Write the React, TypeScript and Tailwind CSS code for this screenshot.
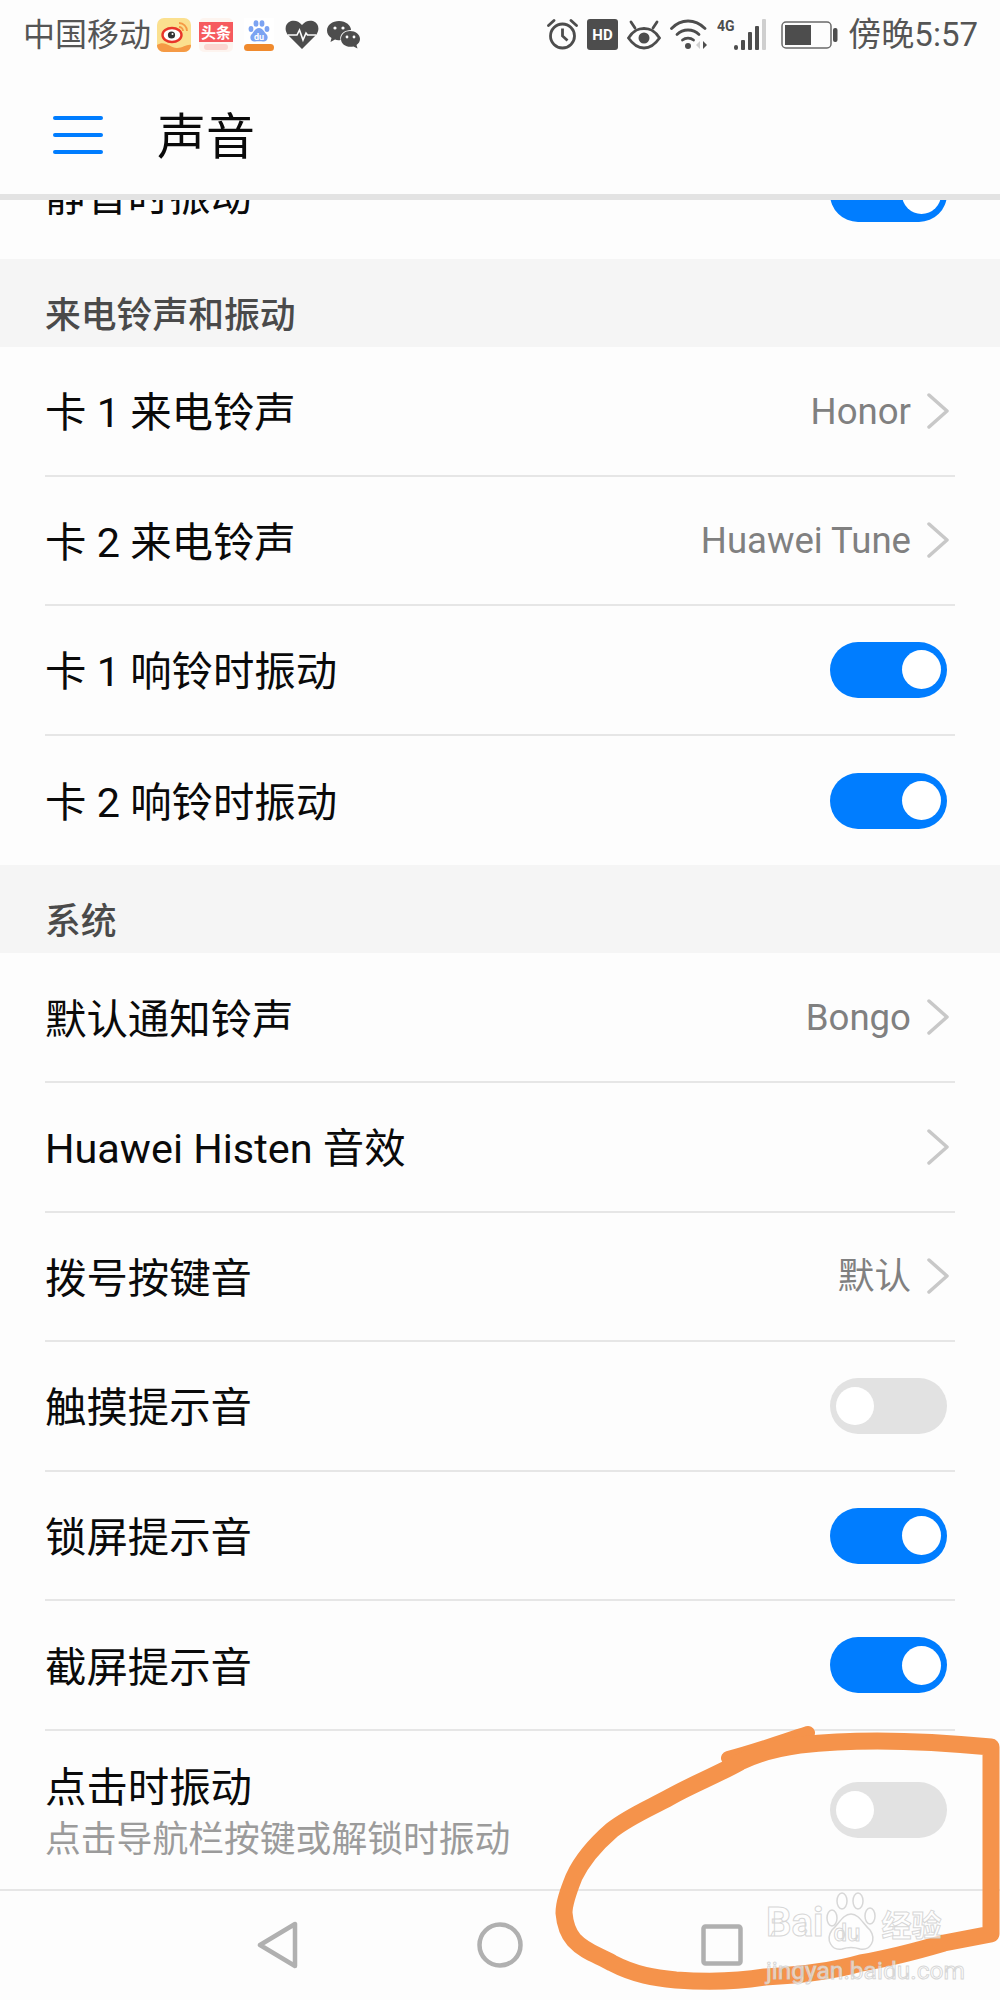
import type { ReactNode } from 'react';

const FONT = 'font-["Roboto","Noto_Sans_CJK_SC",sans-serif]';

/* ── Status bar icons ───────────────────────────────────────────────────── */

function WeiboIcon() {
  return (
    <svg width="34" height="34" viewBox="0 0 34 34">
      <rect width="34" height="34" rx="7" fill="#fbe08f" />
      <path d="M0 27 C8 22 13 30 20 30 C26 30 30 26 34 27 C34 31 31 34 27 34 H7 C3 34 0 31 0 27Z" fill="#f59a45" />
      <ellipse cx="15" cy="17" rx="9.5" ry="7" fill="#fff" stroke="#e8352a" strokeWidth="2.4" />
      <circle cx="14.5" cy="17" r="3.6" fill="#333" />
      <circle cx="15.5" cy="16" r="1" fill="#fff" />
      <path d="M22 5 A8 8 0 0 1 30 13 M22 9 A4 4 0 0 1 26 13" fill="none" stroke="#f59a45" strokeWidth="1.8" />
    </svg>
  );
}

function ToutiaoIcon() {
  return (
    <svg width="34" height="34" viewBox="0 0 34 34">
      <rect width="34" height="34" rx="5" fill="#fdf4ef" />
      <rect y="4" width="34" height="20" fill="#f65a5e" />
      <text x="17" y="20" textAnchor="middle" fontSize="15" fontWeight="700" fill="#fff" fontFamily="Noto Sans CJK SC">头条</text>
      <rect x="5" y="26" width="24" height="6" rx="3" fill="#fbd5d0" />
    </svg>
  );
}

function BaiduIcon() {
  return (
    <svg width="30" height="34" viewBox="0 0 30 34">
      <rect width="30" height="26" fill="#fff" />
      <g fill="#7ba3f2">
        <ellipse cx="7" cy="11" rx="2.4" ry="3" />
        <ellipse cx="12" cy="5.5" rx="2.4" ry="3.2" />
        <ellipse cx="18" cy="5.5" rx="2.4" ry="3.2" />
        <ellipse cx="23" cy="11" rx="2.4" ry="3" />
        <path d="M15 10 C19 10 20 14 23 17 C25 21 22 24 19 23.5 C17 23 13 23 11 23.5 C8 24 5 21 7 17 C10 14 11 10 15 10Z" />
      </g>
      <text x="15" y="22" textAnchor="middle" fontSize="9" fontWeight="700" fill="#fff" fontFamily="Roboto">du</text>
      <rect x="0" y="26" width="30" height="7" rx="3.5" fill="#f08a2e" />
    </svg>
  );
}

function HeartIcon() {
  return (
    <svg width="34" height="30" viewBox="0 0 34 30">
      <path d="M17 29 L3 15 C-1 10 0 3 6 1 C10 0 14 1 17 5 C20 1 24 0 28 1 C34 3 35 10 31 15Z" fill="#4d4d4d" />
      <path d="M3 15 H12 L14.5 10 L18 20 L21 13 L22.5 15 H31" fill="none" stroke="#fdfdfd" strokeWidth="1.6" />
    </svg>
  );
}

function WechatIcon() {
  return (
    <svg width="33" height="28" viewBox="0 0 33 28">
      <path d="M12 0 C19 0 24 4.5 24 9 C18 9 12 13 13.5 19 C11 19.5 9.5 19 8 18.5 L3.5 21 L4.5 17 C1.5 15 0 12.5 0 9.5 C0 4 5.5 0 12 0Z" fill="#4d4d4d" />
      <path d="M23 10 C28.5 10 33 13.5 33 18 C33 20.5 31.5 22.5 29.5 24 L30.5 27.5 L26.5 25.5 C20 27 14 23.5 14 18 C14 13.5 18 10 23 10Z" fill="#4d4d4d" />
      <g fill="#fdfdfd">
        <circle cx="8" cy="7" r="1.6" />
        <circle cx="16" cy="7" r="1.6" />
        <circle cx="20" cy="16" r="1.4" />
        <circle cx="27" cy="16" r="1.4" />
      </g>
    </svg>
  );
}

function AlarmIcon() {
  return (
    <svg width="31" height="31" viewBox="0 0 31 31" fill="none" stroke="#4d4d4d" strokeWidth="2.8">
      <circle cx="15.5" cy="17" r="12" />
      <path d="M15.5 9.5 V17 L20.5 21.5" />
      <path d="M1.5 6.5 L7 1.5 M24 1.5 L29.5 6.5" strokeLinecap="round" />
    </svg>
  );
}

function HdIcon() {
  return (
    <svg width="31" height="31" viewBox="0 0 31 31">
      <rect width="31" height="31" rx="3" fill="#4d4d4d" />
      <text x="15.5" y="21" textAnchor="middle" fontSize="15" fontWeight="700" fill="#fff" fontFamily="Roboto">HD</text>
    </svg>
  );
}

function EyeIcon() {
  return (
    <svg width="34" height="30" viewBox="0 0 34 30" fill="none" stroke="#4d4d4d" strokeWidth="2.8">
      <path d="M1.5 18 C7 9.5 12 8.5 17 8.5 C22 8.5 27 9.5 32.5 18 C27 26 22 28 17 28 C12 28 7 26 1.5 18Z" />
      <circle cx="17" cy="18" r="5.5" fill="#4d4d4d" stroke="none" />
      <path d="M4 2 L8 8 M30 2 L26 8" strokeLinecap="round" />
    </svg>
  );
}

function WifiIcon() {
  return (
    <svg width="38" height="31" viewBox="0 0 38 31" fill="none" stroke="#4d4d4d" strokeWidth="2.8" strokeLinecap="round">
      <path d="M1.5 9.5 C11 -0.5 25 -0.5 35 9.5" />
      <path d="M7 15.5 C13 9.5 23 9.5 29 15.5" />
      <path d="M12.5 21 C15.5 18.5 20.5 18.5 23.5 21" />
      <circle cx="18" cy="27" r="3" fill="#4d4d4d" stroke="none" />
      <path d="M26 26 L30 22 V30Z" fill="#d0d0d0" stroke="none" />
      <path d="M33 22 L37 26 L33 30Z" fill="#4d4d4d" stroke="none" />
    </svg>
  );
}

function SignalIcon() {
  return (
    <svg width="50" height="32" viewBox="0 0 50 32">
      <text x="0" y="12" fontSize="14" fontWeight="700" fill="#4d4d4d" fontFamily="Roboto">4G</text>
      <rect x="17" y="26" width="4" height="5" rx="2" fill="#4d4d4d" />
      <rect x="24" y="21" width="4" height="10" rx="1" fill="#4d4d4d" />
      <rect x="31" y="13" width="4" height="18" rx="1" fill="#4d4d4d" />
      <rect x="38" y="7" width="4" height="24" rx="1" fill="#4d4d4d" />
      <rect x="45" y="0" width="4" height="31" rx="1" fill="#cfcfcf" />
    </svg>
  );
}

function BatteryIcon() {
  return (
    <svg width="57" height="28" viewBox="0 0 57 28">
      <rect x="1" y="1" width="49" height="26" rx="4" fill="none" stroke="#6a6a6a" strokeWidth="1.5" />
      <rect x="4" y="4" width="26" height="20" fill="#4d4d4d" />
      <rect x="52" y="7" width="4.5" height="14" rx="2" fill="#4d4d4d" />
    </svg>
  );
}

/* ── List pieces ────────────────────────────────────────────────────────── */

function Toggle({ on }: { on: boolean }) {
  return (
    <span
      className={`flex h-[56px] w-[117px] shrink-0 items-center rounded-full px-[6px] ${
        on ? 'justify-end bg-[#007dff]' : 'justify-start bg-[#e2e2e2]'
      }`}
    >
      <span className={`rounded-full bg-white ${on ? 'h-[39px] w-[39px]' : 'h-[38px] w-[38px]'}`} />
    </span>
  );
}

function Chevron() {
  return (
    <svg width="22" height="36" viewBox="0 0 22 36" fill="none" stroke="#c8c8c8" strokeWidth="3.5" strokeLinecap="round" strokeLinejoin="round" className="shrink-0">
      <path d="M2 2 L20 18 L2 34" />
    </svg>
  );
}

function Row({ title, value, chevron, toggle, last }: {
  title: string;
  value?: string;
  chevron?: boolean;
  toggle?: boolean;
  last?: boolean;
}) {
  let right: ReactNode = null;
  if (toggle !== undefined) right = <Toggle on={toggle} />;
  else if (chevron)
    right = (
      <div className="-mr-[2px] flex items-center gap-[16px]">
        {value && <span className="pt-[3px] text-[36.6px] text-[#808080]">{value}</span>}
        <Chevron />
      </div>
    );
  return (
    <div className={`mx-[45px] flex h-[129.6px] shrink-0 items-center justify-between pr-[8px] ${last ? '' : 'border-b-2 border-[#e6e6e6]'}`}>
      <span className="pt-[5px] text-[41.4px] leading-[48px] text-[#0a0a0a]">{title}</span>
      {right}
    </div>
  );
}

function SectionHeader({ title }: { title: string }) {
  return (
    <div className="flex h-[88px] shrink-0 items-center bg-[#f5f5f5] px-[45px] pt-[27px] text-[35.8px] font-medium text-[#4a4a4a]">
      {title}
    </div>
  );
}

/* ── Overlays: the hand-drawn ring and the watermark ────────────────────── */

function Scribble() {
  return (
    <svg className="absolute left-0 top-0" width="1000" height="2000" viewBox="0 0 1000 2000" fill="none" stroke="#f5934b" strokeLinecap="round" strokeLinejoin="round">
      <path d="M808 1733 C780 1742 752 1752 728 1758" strokeWidth="14" />
      <path
        strokeWidth="17"
        d="M991 1934 L991 1747 C930 1741 860 1738 800 1745 C778 1748 758 1753 740 1762 C717 1775 693 1784 670 1797 C650 1808 630 1816 612 1830 C597 1843 582 1860 574 1877 C568 1892 564 1903 564 1913 C565 1925 568 1933 574 1940 C585 1952 598 1955 612 1963 C635 1975 655 1978 676 1980 C705 1982 735 1982 765 1977 C800 1975 830 1972 861 1963 C890 1958 920 1950 944 1943 L991 1934"
      />
    </svg>
  );
}

function Watermark() {
  return (
    <div className="absolute left-[766px] top-[1892px] flex flex-col items-start text-white/60 [-webkit-text-stroke:1px_rgba(205,205,205,0.8)]">
      <div className="flex items-end">
        <span className="text-[40px] font-bold leading-[58px]">Bai</span>
        <div className="relative h-[60px] w-[54px]">
          <svg width="54" height="60" viewBox="0 0 54 60" fill="rgba(255,255,255,0.6)" stroke="rgba(205,205,205,0.8)" strokeWidth="1.5">
            <ellipse cx="8" cy="26" rx="5" ry="8" />
            <ellipse cx="18" cy="9" rx="5" ry="8" />
            <ellipse cx="34" cy="9" rx="5" ry="8" />
            <ellipse cx="46" cy="24" rx="5" ry="8" />
            <path d="M27 22 C35 22 39 32 46 38 C53 48 46 59 36 57 C30 55 24 55 18 57 C8 59 1 48 8 38 C15 32 19 22 27 22Z" />
          </svg>
          <span className="absolute bottom-[5px] left-[10px] text-[24px] font-medium leading-[28px]">du</span>
        </div>
        <span className="ml-[4px] text-[30px] font-bold leading-[52px]">经验</span>
      </div>
      <span className="mt-[5px] text-[24.5px] leading-[28px]">jingyan.baidu.com</span>
    </div>
  );
}

/* ── Page ───────────────────────────────────────────────────────────────── */

export default function App() {
  return (
    <div className={`relative flex h-[2000px] w-[1000px] flex-col overflow-hidden bg-[#fdfdfd] ${FONT}`}>
      <div className="flex h-[60px] shrink-0 items-center justify-between pl-[23px] pr-[22px] pt-[9px] text-[32px] text-[#555555]">
        <div className="flex items-center">
          <span>中国移动</span>
          <div className="ml-[6px] flex items-center gap-[8px]">
            <WeiboIcon />
            <ToutiaoIcon />
            <span className="ml-[3px]"><BaiduIcon /></span>
            <span className="ml-[3px]"><HeartIcon /></span>
            <WechatIcon />
          </div>
        </div>
        <div className="flex items-center">
          <div className="flex items-center gap-[9px]">
            <AlarmIcon />
            <HdIcon />
            <EyeIcon />
            <WifiIcon />
            <SignalIcon />
            <span className="ml-[5px]"><BatteryIcon /></span>
          </div>
          <span className="ml-[10px] text-[33px]">傍晚5:57</span>
        </div>
      </div>

      <div className="flex h-[134px] shrink-0 items-center pt-[16px]">
        <div className="ml-[53px] flex w-[50px] flex-col gap-[13px]">
          <span className="h-[4px] rounded-full bg-[#007dff]" />
          <span className="h-[4px] rounded-full bg-[#007dff]" />
          <span className="h-[4px] rounded-full bg-[#007dff]" />
        </div>
        <span className="ml-[54px] pt-[6px] text-[49px] text-[#0a0a0a]">声音</span>
      </div>
      <div className="h-[6px] shrink-0 bg-[#e3e3e3]" />

      {/* row scrolled under the header */}
      <div className="flex h-[59px] shrink-0 flex-col justify-end overflow-hidden">
        <Row title="静音时振动" toggle last />
      </div>

      <SectionHeader title="来电铃声和振动" />
      <Row title="卡 1 来电铃声" value="Honor" chevron />
      <Row title="卡 2 来电铃声" value="Huawei Tune" chevron />
      <Row title="卡 1 响铃时振动" toggle />
      <Row title="卡 2 响铃时振动" toggle last />

      <SectionHeader title="系统" />
      <Row title="默认通知铃声" value="Bongo" chevron />
      <Row title="Huawei Histen 音效" chevron />
      <Row title="拨号按键音" value="默认" chevron />
      <Row title="触摸提示音" toggle={false} />
      <Row title="锁屏提示音" toggle />
      <Row title="截屏提示音" toggle />
      <div className="mx-[45px] flex h-[158px] shrink-0 items-center justify-between pr-[8px]">
        <div className="flex flex-col pt-[6px]">
          <span className="text-[41.4px] leading-[48px] text-[#0a0a0a]">点击时振动</span>
          <span className="mt-[6px] text-[35.8px] leading-[44px] text-[#9b9b9b]">点击导航栏按键或解锁时振动</span>
        </div>
        <Toggle on={false} />
      </div>

      {/* navigation bar */}
      <div className="flex flex-1 items-center border-t-2 border-[#e6e6e6] pl-[257px]">
        <svg width="42" height="48" viewBox="0 0 42 48" fill="none" stroke="#b0b0b0" strokeWidth="4.5" strokeLinejoin="round">
          <path d="M38 3 V45 L3 24 Z" />
        </svg>
        <svg width="46" height="46" viewBox="0 0 46 46" fill="none" stroke="#b0b0b0" strokeWidth="4.5" className="ml-[178px]">
          <circle cx="23" cy="23" r="20.5" />
        </svg>
        <svg width="42" height="42" viewBox="0 0 42 42" fill="none" stroke="#b0b0b0" strokeWidth="4.5" className="ml-[178px]">
          <rect x="2.5" y="2.5" width="37" height="37" rx="2" />
        </svg>
      </div>

      <Scribble />
      <Watermark />
    </div>
  );
}
